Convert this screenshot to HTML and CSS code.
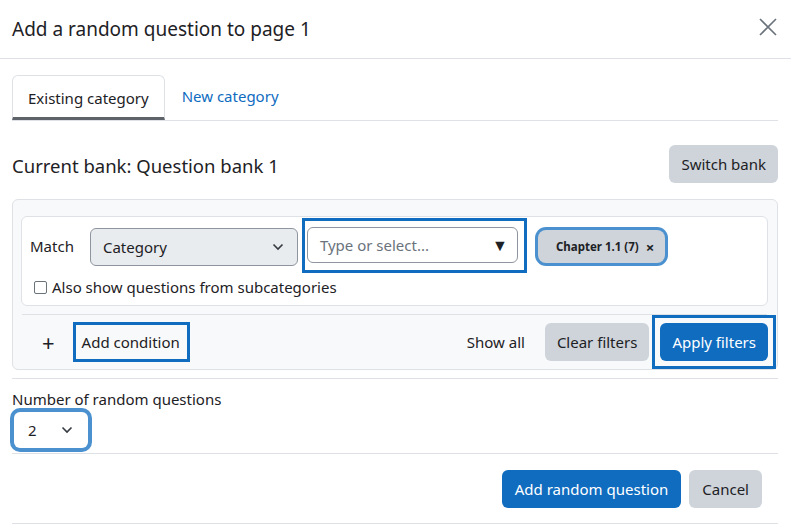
FILE: index.html
```html
<!DOCTYPE html>
<html lang="en">
<head>
    <meta charset="UTF-8">
    <title>Add a random question</title>
    <link rel="stylesheet" href="styles.css">
</head>
<body>
    <div class="modal">
        <div class="modal-header">
            <h5 class="modal-title">Add a random question to page 1</h5>
            <button class="close" aria-label="Close">
                <svg width="18" height="18" viewBox="0 0 18 18"><path d="M1 1 L17 17 M17 1 L1 17" stroke="#6a737b" stroke-width="1.6" fill="none"/></svg>
            </button>
        </div>

        <div class="modal-body">
            <!-- Tabs -->
            <ul class="tabs">
                <li class="tab active">Existing category</li>
                <li class="tab"><a href="#">New category</a></li>
            </ul>

            <div class="bank-row">
                <h4 class="bank-title">Current bank: Question bank 1</h4>
                <button class="btn btn-secondary">Switch bank</button>
            </div>

            <!-- Filtro -->
            <div class="filter-box">
                <div class="filter-card">
                    <div class="cond-row">
                        <span class="match">Match</span>
                        <div class="select select-grey">
                            <span>Category</span>
                            <svg class="chev" width="12" height="8" viewBox="0 0 12 8"><path d="M1.5 1.5 L6 6 L10.5 1.5" stroke="#343a40" stroke-width="1.6" fill="none"/></svg>
                        </div>
                        <div class="focus-wrap">
                            <div class="typeahead">
                                <span class="placeholder">Type or select...</span>
                                <span class="tri">&#9660;</span>
                            </div>
                        </div>
                        <span class="chip">Chapter 1.1 (7) <span class="chip-x">&times;</span></span>
                    </div>
                    <label class="check"><span class="box"></span>Also show questions from subcategories</label>
                </div>
                <div class="filter-actions">
                    <span class="plus">+</span>
                    <span class="add-cond">Add condition</span>
                    <span class="spacer"></span>
                    <span class="show-all">Show all</span>
                    <button class="btn btn-secondary">Clear filters</button>
                    <span class="focus-box"><button class="btn btn-primary">Apply filters</button></span>
                </div>
            </div>

            <div class="number-field">
                <label class="number-label">Number of random questions</label>
                <div class="select select-num">
                    <span>2</span>
                    <svg class="chev" width="12" height="8" viewBox="0 0 12 8"><path d="M1.5 1.5 L6 6 L10.5 1.5" stroke="#343a40" stroke-width="1.6" fill="none"/></svg>
                </div>
            </div>

            <div class="form-buttons">
                <button class="btn btn-primary btn-wide">Add random question</button>
                <button class="btn btn-secondary btn-wide">Cancel</button>
            </div>
        </div>
    </div>
</body>
</html>
```
FILE: styles.css
```css
/* Base */
body {
    margin: 0;
    background: #fff;
    color: #1d2125;
    font-family: "Noto Sans", "Open Sans", sans-serif;
    font-size: 15px;
}

.modal {
    width: 791px;
}

/* Cabeçalho */
.modal-header {
    height: 58px;
    border-bottom: 1px solid #dee2e6;
    display: flex;
    align-items: center;
    justify-content: space-between;
    padding: 0 12px;
}

.modal-title {
    margin: 0;
    font-size: 19px;
    font-weight: 400;
}

.close {
    background: none;
    border: none;
    padding: 0;
    margin-right: 2px;
    margin-top: -4px;
    display: flex;
}

.modal-body {
    padding: 16px 13px 0 12px;
}

/* Abas */
.tabs {
    list-style: none;
    margin: 0;
    padding: 0;
    display: flex;
    border-bottom: 1px solid #dee2e6;
}

.tab {
    height: 42px;
    padding: 0 16px;
    display: flex;
    align-items: center;
    margin-right: 1px;
}

.tab.active {
    border: 1px solid #dee2e6;
    border-bottom: 3px solid #5d6369;
    border-radius: 6px 6px 0 0;
    padding: 2px 15px 0;
    height: 39px;
}

.tab a {
    color: #0f6cbf;
    text-decoration: none;
    margin-top: -1px;
}

.bank-row {
    display: flex;
    align-items: center;
    justify-content: space-between;
    margin-top: 24px;
}

.bank-title {
    margin: 2px 0 0;
    font-size: 18.5px;
    font-weight: 400;
}

/* Botões */
.btn {
    font-family: inherit;
    font-size: 15px;
    height: 38px;
    padding: 0 12px;
    border: none;
    border-radius: 6px;
    color: #1d2125;
}

.btn-wide {
    padding: 0 13px;
}

.btn-secondary {
    background: #ced4da;
}

.btn-primary {
    background: #0f6cbf;
    color: #fff;
}

/* Filtro */
.filter-box {
    margin-top: 16px;
    background: #f8f9fa;
    border: 1px solid #dee2e6;
    border-radius: 6px;
    padding: 16px 9px 0 8px;
}

.filter-card {
    background: #fff;
    border: 1px solid #dee2e6;
    border-radius: 6px;
    padding: 1px 8px 8px 8px;
}

.cond-row {
    display: flex;
    align-items: center;
    height: 55px;
}

.match {
    margin-right: 16px;
}

.select {
    display: flex;
    align-items: center;
    justify-content: space-between;
    box-sizing: border-box;
    height: 38px;
    border: 1px solid #8f959e;
    border-radius: 6px;
    padding: 0 13px 0 12px;
}

.select-grey {
    width: 208px;
    background: #e9ecef;
    margin-top: 2px;
}

.focus-wrap {
    margin-left: 4px;
    border: 3px solid #0f6cbf;
    padding: 6px 6px 7px 2px;
    box-sizing: border-box;
    height: 55px;
    width: 225px;
}

.typeahead {
    display: flex;
    align-items: center;
    justify-content: space-between;
    height: 36px;
    box-sizing: border-box;
    border: 1px solid #8f959e;
    border-radius: 6px;
    padding: 0 9px 0 12px;
}

.placeholder {
    color: #6a737b;
}

.tri {
    font-size: 16px;
    color: #1d2125;
}

.chip {
    margin-left: 11px;
    margin-top: 2px;
    background: #ced4da;
    border-radius: 8px;
    box-shadow: 0 0 0 3px #4b91cf;
    height: 33px;
    padding: 0 11px 0 18px;
    display: flex;
    align-items: center;
    font-size: 11.5px;
    font-weight: 700;
}

.chip-x {
    margin-left: 7px;
    font-size: 15px;
}

.check {
    display: flex;
    align-items: center;
    margin: 4px 0 0 4px;
    height: 20px;
}

.box {
    width: 11px;
    height: 11px;
    border: 1px solid #6a737b;
    border-radius: 2px;
    margin-right: 5px;
    background: #fff;
}

.filter-actions {
    margin: 8px 1px 0;
    border-top: 1px solid #dee2e6;
    display: flex;
    align-items: center;
    height: 54px;
}

.plus {
    font-size: 22px;
    margin: 0 18px 0 20px;
    line-height: 1;
}

.add-cond {
    border: 3px solid #0f6cbf;
    height: 40px;
    box-sizing: border-box;
    display: flex;
    align-items: center;
    padding: 0 7px 0 6px;
}

.spacer {
    flex: 1;
}

.show-all {
    margin-right: 20px;
}

.filter-actions .btn-secondary {
    margin-right: 3px;
}

.focus-box {
    display: flex;
    border: 3px solid #0f6cbf;
    padding: 5px 5px;
    margin-right: -9px;
    margin-top: -1px;
}

/* Número de questões */
.number-field {
    margin-top: 8px;
    border-top: 1px solid #dee2e6;
    border-bottom: 1px solid #dee2e6;
    padding: 10px 0 0;
    height: 64px;
}

.number-label {
    display: block;
    line-height: 20px;
}

.select-num {
    width: 74px;
    background: #fff;
    border: none;
    box-shadow: 0 0 0 4px #4b91cf;
    border-radius: 6px;
    height: 36px;
    margin-top: 3px;
    margin-left: 2px;
    padding: 0 15px 0 14px;
}

.form-buttons {
    display: flex;
    justify-content: flex-end;
    gap: 8px;
    padding: 16px 16px 15px 0;
    border-bottom: 1px solid #dee2e6;
}
```
